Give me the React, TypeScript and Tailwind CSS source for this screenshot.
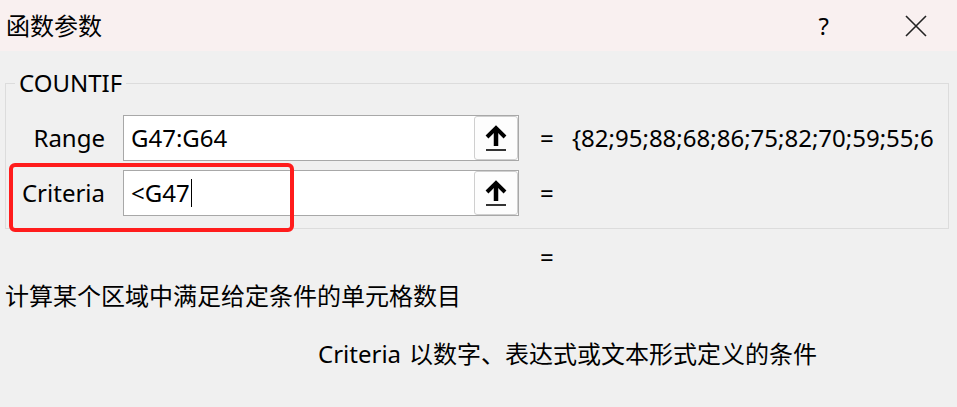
const ArrowUp = () => (
  <svg width="24" height="28" viewBox="0 0 24 28" fill="none">
    <path d="M12 5v17" stroke="#000" strokeWidth="4.5" />
    <path d="M3 13 12 4l9 9" stroke="#000" strokeWidth="4" strokeLinejoin="miter" />
    <path d="M2 26h20" stroke="#000" strokeWidth="1.6" />
  </svg>
)

const ArgRow = ({ label, value, result, caret }: { label: string; value: string; result?: string; caret?: boolean }) => (
  <div className="flex h-[46px] items-center">
    <div className="w-[99px] shrink-0 text-right">{label}</div>
    <div className="ml-[18px] flex h-[46px] w-[396px] shrink-0 items-center border border-[#a8a8a8] bg-white">
      <div className="flex flex-1 items-center pl-[7px]">
        {value}
        {caret && <span className="ml-[1px] inline-block h-[28px] w-[1px] bg-black" />}
      </div>
      <div className="flex h-[44px] w-[44px] items-center justify-center rounded-[3px] border border-[#cfcfcf] bg-[#fdfdfd]">
        <ArrowUp />
      </div>
    </div>
    <div className="ml-[21px] w-[32px] shrink-0">=</div>
    <div className="whitespace-nowrap">{result}</div>
  </div>
)

export default function App() {
  return (
    <div
      className="relative h-[407px] w-[957px] overflow-hidden bg-[#f0f0f0] text-[24px] leading-[32px] text-black"
      style={{ fontFamily: '"Noto Sans", "Noto Sans CJK SC", sans-serif' }}
    >
      <div className="flex h-[51px] items-center bg-[#f9f0f0]">
        <div className="pl-[6px]">函数参数</div>
        <div className="ml-auto mr-[76px]">?</div>
        <svg width="22" height="22" viewBox="0 0 22 22" className="mr-[30px]">
          <path d="M1 1l20 20M21 1 1 21" stroke="#222" strokeWidth="1.6" />
        </svg>
      </div>

      <fieldset className="ml-[5px] mt-[16px] w-[944px] border border-[#dcdcdc] px-0 pb-[12px] pt-[16px]">
        <legend className="ml-[9px] px-[4px] leading-[32px]">COUNTIF</legend>
        <div className="flex flex-col gap-[9px]">
          <ArgRow label="Range" value="G47:G64" result="{82;95;88;68;86;75;82;70;59;55;6" />
          <ArgRow label="Criteria" value="<G47" caret />
        </div>
      </fieldset>

      <div className="ml-[540px] mt-[12px]">=</div>
      <div className="ml-[5px] mt-[7px]">计算某个区域中满足给定条件的单元格数目</div>
      <div className="ml-[318px] mt-[26px] flex">
        <span>Criteria</span>
        <span className="ml-[8px]">以数字、表达式或文本形式定义的条件</span>
      </div>

      <div className="pointer-events-none absolute left-[9px] top-[163px] h-[69px] w-[285px] rounded-[6px] border-[4px] border-[#ff1c1c]" />
    </div>
  )
}
